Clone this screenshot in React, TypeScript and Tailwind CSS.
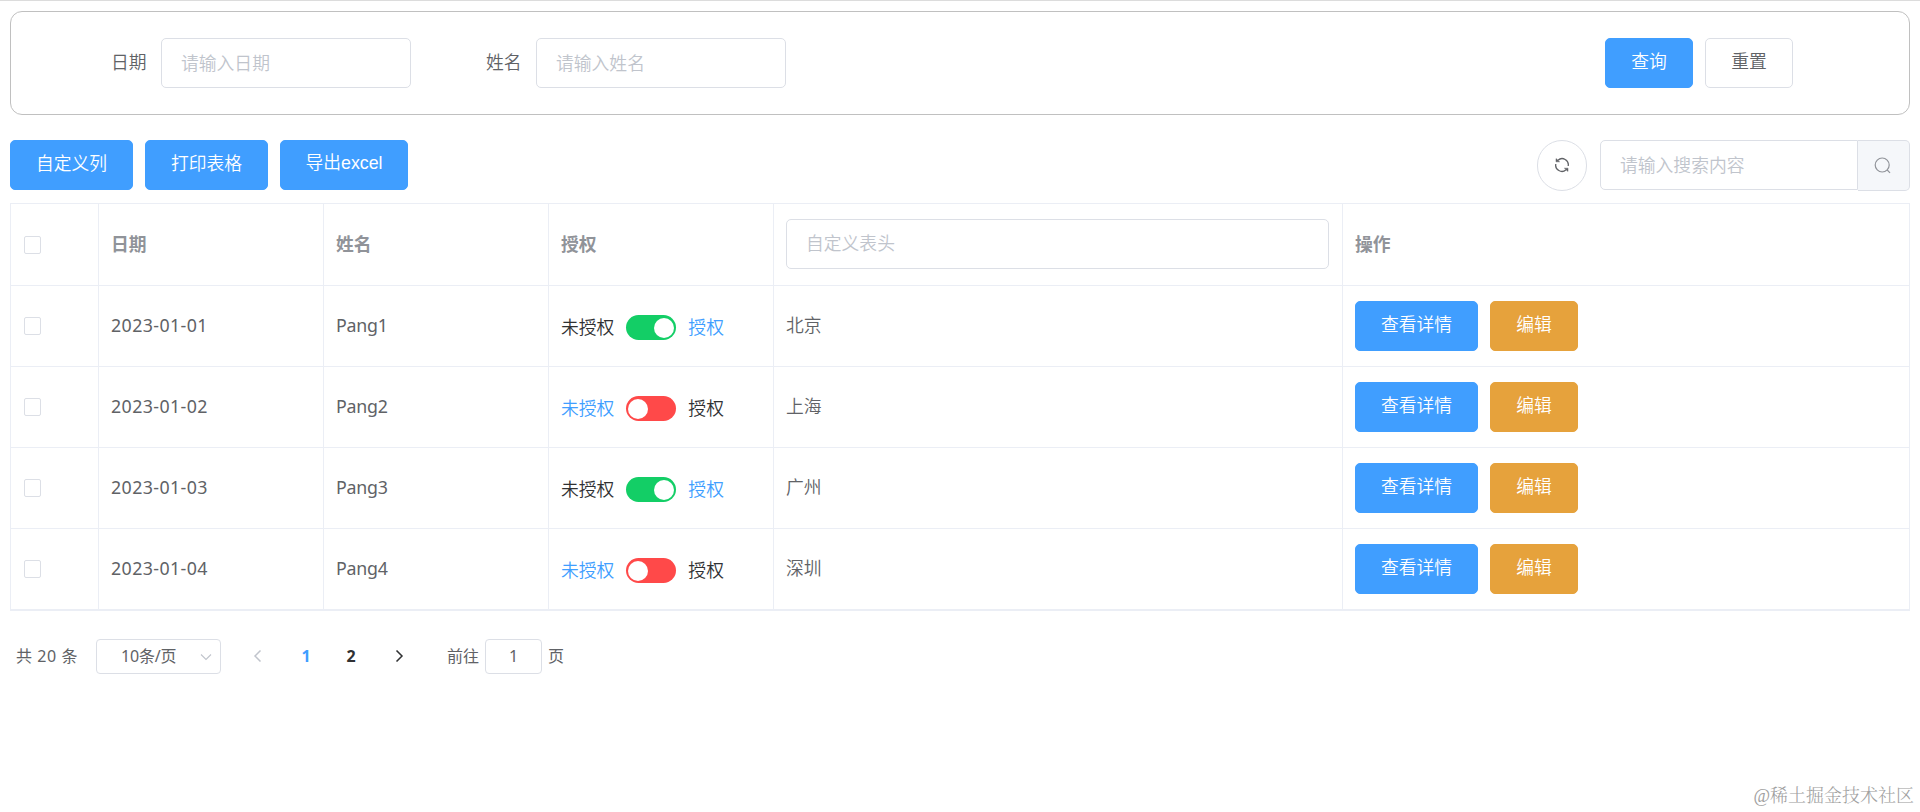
import { useState, type ReactNode } from 'react'
import clsx from 'clsx'

interface Row {
  date: string
  name: string
  authorized: boolean
  city: string
}

const rows: Row[] = [
  { date: '2023-01-01', name: 'Pang1', authorized: true, city: '北京' },
  { date: '2023-01-02', name: 'Pang2', authorized: false, city: '上海' },
  { date: '2023-01-03', name: 'Pang3', authorized: true, city: '广州' },
  { date: '2023-01-04', name: 'Pang4', authorized: false, city: '深圳' },
]

interface ButtonProps {
  type?: 'default' | 'primary' | 'warning'
  className?: string
  children: ReactNode
}

function Button({ type = 'default', className, children }: ButtonProps) {
  return (
    <button
      className={clsx(
        'h-[50px] shrink-0 rounded-[5px] border pb-[3px] text-center leading-none whitespace-nowrap',
        type === 'default' && 'border-[#dcdfe6] bg-white text-[#606266]',
        type === 'primary' && 'border-[#409eff] bg-[#409eff] text-white',
        type === 'warning' && 'border-[#e6a23c] bg-[#e6a23c] text-white',
        className,
      )}
    >
      {children}
    </button>
  )
}

function Input({ placeholder, className }: { placeholder: string; className?: string }) {
  return (
    <input
      placeholder={placeholder}
      className={clsx(
        'block h-[50px] rounded-[5px] border border-[#dcdfe6] bg-white px-[19px] pb-[1px] text-[#606266] outline-none placeholder:text-[#c0c4cc]',
        className,
      )}
    />
  )
}

function Checkbox() {
  return <span className="ml-px block h-[18px] w-[17px] rounded-[2px] border border-[#dcdfe6] bg-white" />
}

function AuthSwitch({ initial }: { initial: boolean }) {
  const [on, setOn] = useState(initial)
  return (
    <div className="flex items-center pt-[3px] leading-none">
      <span className={on ? 'text-[#303133]' : 'text-[#409eff]'}>未授权</span>
      <button
        onClick={() => setOn(!on)}
        className={clsx(
          'mx-[12px] flex h-[25px] w-[50px] items-center rounded-full px-[2px]',
          on ? 'justify-end bg-[#13ce66]' : 'justify-start bg-[#ff4949]',
        )}
      >
        <span className="size-[20px] rounded-full bg-white" />
      </button>
      <span className={on ? 'text-[#409eff]' : 'text-[#303133]'}>授权</span>
    </div>
  )
}

function RefreshIcon() {
  return (
    <svg viewBox="0 0 16 16" className="mb-[2px] size-[16px]" fill="none" stroke="currentColor" strokeWidth="1.3">
      <path d="M4 3.2A6.2 6.2 0 0 1 14.2 9" />
      <path d="M12 12.8A6.2 6.2 0 0 1 1.8 7" />
      <path d="M2 1.6v3.2h3.6z" fill="currentColor" strokeWidth="0.5" />
      <path d="M14 14.4v-3.2h-3.6z" fill="currentColor" strokeWidth="0.5" />
    </svg>
  )
}

function SearchIcon() {
  return (
    <svg viewBox="0 0 17 17" className="mr-[2px] size-[17px]" fill="none" stroke="currentColor" strokeWidth="1.2">
      <circle cx="8.2" cy="8" r="7" />
      <path d="M13.2 13l2.8 2.8" />
    </svg>
  )
}

function Chevron({ className, d, width = 1.5 }: { className?: string; d: string; width?: number }) {
  return (
    <svg viewBox="0 0 12 12" className={clsx('size-[12px] shrink-0', className)} fill="none" stroke="currentColor" strokeWidth={width}>
      <path d={d} />
    </svg>
  )
}

function Cell({ head, className, children }: { head?: boolean; className?: string; children?: ReactNode }) {
  return (
    <div
      className={clsx(
        'flex items-center border-r border-[#ebeef5] pl-[12px]',
        head && 'font-bold text-[#909399]',
        className,
      )}
    >
      {children}
    </div>
  )
}

const columns = 'grid grid-cols-[88px_225px_225px_225px_569px_567px] border-b border-[#ebeef5]'

export default function App() {
  return (
    <div className="flex h-[812px] w-full flex-col overflow-hidden border-t border-[#dcdcdc] bg-white px-[10px] pt-[10px] font-['Noto_Sans','Noto_Sans_CJK_SC',sans-serif] text-[17.8px] font-[350] text-[#606266]">
      <div className="flex h-[104px] shrink-0 items-center rounded-[12px] border border-[#c0c0c0] pr-[116px] pl-[100px]">
        <span className="w-[50px] pb-[1px]">日期</span>
        <Input placeholder="请输入日期" className="w-[250px]" />
        <span className="ml-[75px] w-[50px] pb-[1px]">姓名</span>
        <Input placeholder="请输入姓名" className="w-[250px]" />
        <div className="ml-auto flex gap-[12px]">
          <Button type="primary" className="w-[88px]">查询</Button>
          <Button className="w-[88px]">重置</Button>
        </div>
      </div>

      <div className="mt-[25px] flex h-[50px] shrink-0">
        <div className="flex gap-[12px]">
          <Button type="primary" className="w-[123px]">自定义列</Button>
          <Button type="primary" className="w-[123px]">打印表格</Button>
          <Button type="primary" className="w-[128px] font-['Liberation_Sans','Noto_Sans_CJK_SC',sans-serif]">
            导出excel
          </Button>
        </div>
        <button className="ml-auto flex h-[51px] w-[50px] items-center justify-center rounded-full border border-[#dcdfe6]">
          <RefreshIcon />
        </button>
        <Input placeholder="请输入搜索内容" className="ml-[13px] w-[258px] rounded-r-none" />
        <button className="flex h-[51px] w-[52px] items-center justify-center rounded-r-[5px] border border-l-0 border-[#dcdfe6] bg-[#f5f7fa] text-[#909399]">
          <SearchIcon />
        </button>
      </div>

      <div className="mt-[13px] shrink-0 border-t border-b border-l border-[#ebeef5]">
        <div className={clsx(columns, 'h-[82px]')}>
          <Cell head><Checkbox /></Cell>
          <Cell head>日期</Cell>
          <Cell head>姓名</Cell>
          <Cell head>授权</Cell>
          <Cell className="pr-[13px] pb-[2px]">
            <Input placeholder="自定义表头" className="w-full" />
          </Cell>
          <Cell head>操作</Cell>
        </div>
        {rows.map((row) => (
          <div key={row.date} className={clsx(columns, 'h-[81px]')}>
            <Cell><Checkbox /></Cell>
            <Cell className="pb-[2px] font-normal tracking-[0.4px]">{row.date}</Cell>
            <Cell className="pb-[2px] font-normal tracking-[-0.2px]">{row.name}</Cell>
            <Cell><AuthSwitch initial={row.authorized} /></Cell>
            <Cell className="pb-[1px]">{row.city}</Cell>
            <Cell className="gap-[12px]">
              <Button type="primary" className="w-[123px]">查看详情</Button>
              <Button type="warning" className="w-[88px]">编辑</Button>
            </Cell>
          </div>
        ))}
      </div>

      <div className="mt-[28px] flex h-[35px] shrink-0 items-center pl-[6px] text-[16px] leading-[33px] font-normal">
        <span className="w-[80px] pb-[1px] tracking-[0.6px] whitespace-nowrap">共 20 条</span>
        <div className="flex h-[35px] w-[125px] items-center rounded-[4px] border border-[#dcdfe6] pr-[8px] pl-[24px]">
          <span className="pb-[1px] tracking-[-0.2px]">10条/页</span>
          <Chevron d="M1 3.5l5 5 5-5" width={1.1} className="ml-auto text-[#c0c4cc]" />
        </div>
        <Chevron d="M8.5 0.5L3 6l5.5 5.5" className="mb-[2px] ml-[31px] text-[#c0c4cc]" />
        <span className="ml-[26px] w-[32px] pb-[1px] text-center font-bold text-[#409eff]">1</span>
        <span className="ml-[13px] w-[32px] pb-[1px] text-center font-bold text-[#303133]">2</span>
        <Chevron d="M3.5 0.5L9 6l-5.5 5.5" className="mb-[2px] ml-[26px] text-[#303133]" />
        <span className="ml-[42px] w-[38px] pb-[1px]">前往</span>
        <div className="mr-[6px] flex h-[35px] w-[57px] items-center justify-center rounded-[4px] border border-[#dcdfe6] pb-[1px]">1</div>
        <span className="pb-[1px]">页</span>
      </div>

      <div className="mt-auto mr-[-4px] pb-[4px] text-right font-['Liberation_Serif','Noto_Serif_CJK_SC','Noto_Sans_CJK_SC',serif] text-[18px] leading-[24px] font-light text-[#a0a0a0]">
        @稀土掘金技术社区
      </div>
    </div>
  )
}
